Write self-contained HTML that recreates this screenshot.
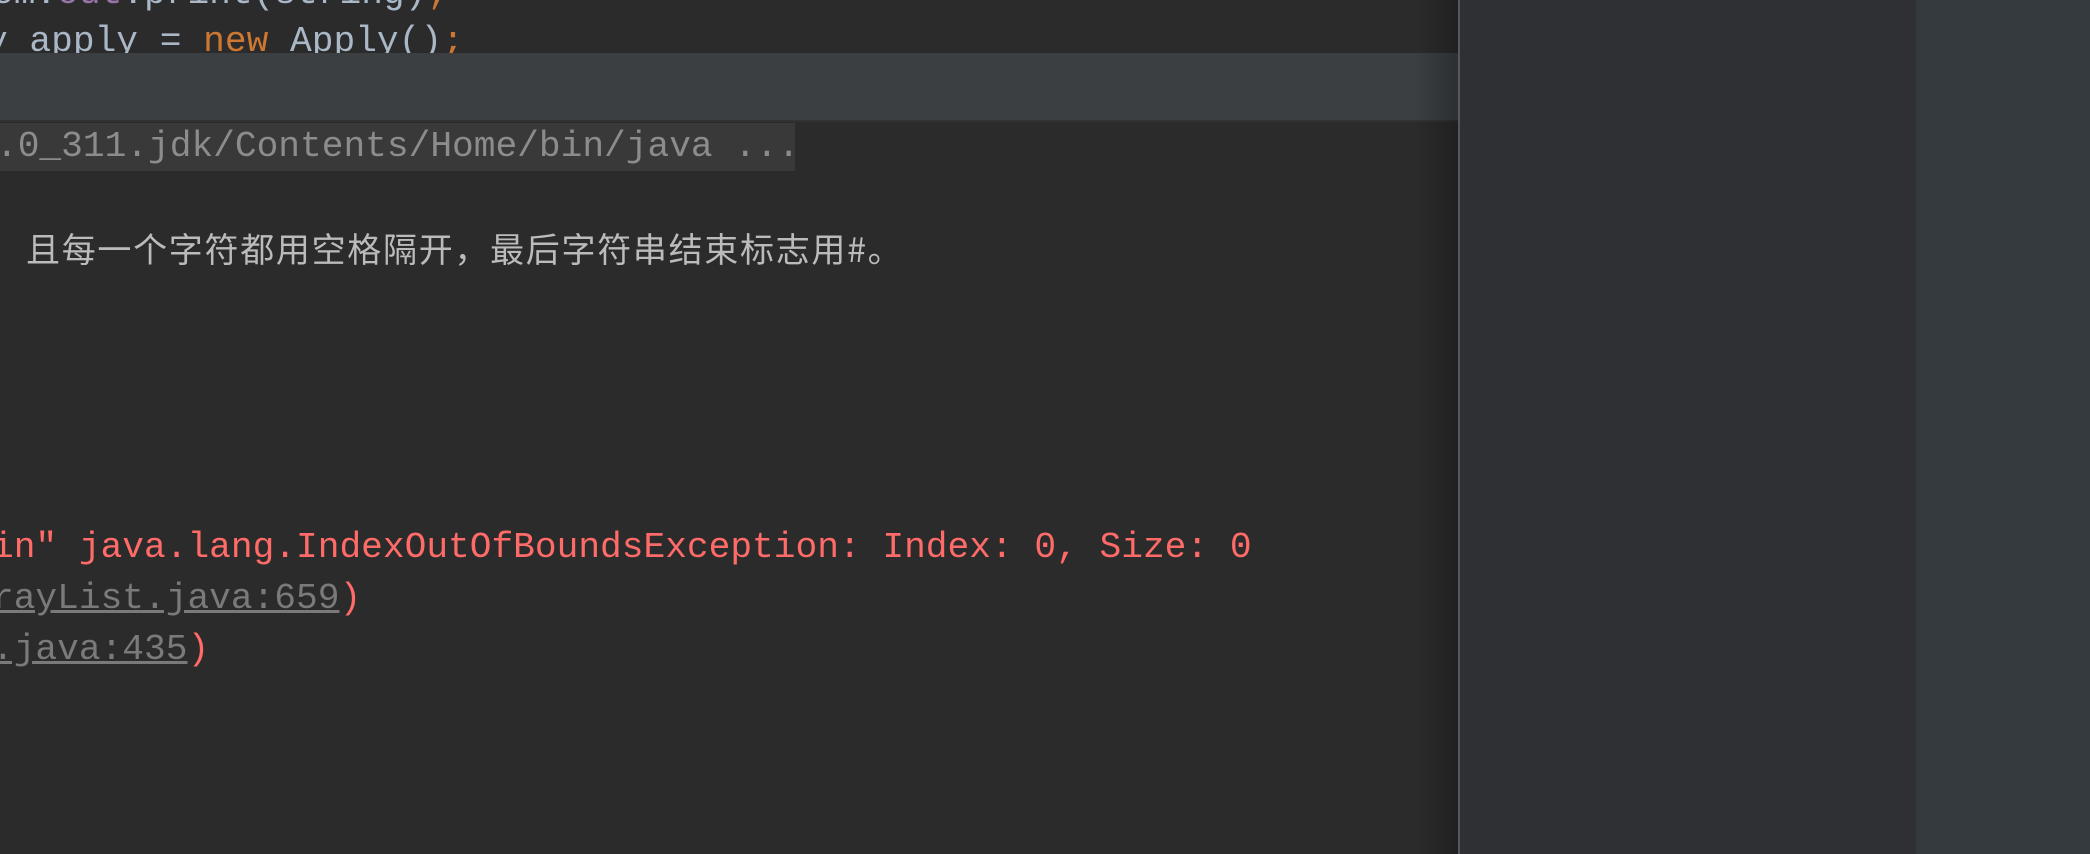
<!DOCTYPE html>
<html><head><meta charset="utf-8"><style>
body{margin:0;width:2090px;height:854px;overflow:hidden;background:#2b2b2b;position:relative;font-family:"Liberation Mono","Noto Sans CJK SC",monospace;}
.a{position:absolute;white-space:pre;font-size:36.2px;line-height:44px;}
</style></head><body>
<div class="a" style="left:-8px;top:-28px;color:#a9b7c6">em.<span style="color:#9876aa">out</span>.print(string)<span style="color:#cc7832">;</span></div>
<div class="a" style="left:-14px;top:20px;color:#a9b7c6">y apply = <span style="color:#cc7832">new</span> Apply()<span style="color:#cc7832">;</span></div>
<div style="position:absolute;left:0;top:53px;width:1458px;height:67px;background:#3b3f42;border-bottom:2px solid #323232"></div>
<div style="position:absolute;left:0;top:123px;width:795px;height:48px;background:#393939"></div>
<div class="a" style="left:-4px;top:125px;color:#8c8c8c">.0_311.jdk/Contents/Home/bin/java ...</div>
<div class="a" style="left:26px;top:225px;font-size:34px;line-height:46px;letter-spacing:1.7px;color:#bbbbbb;font-family:'Noto Sans CJK SC',sans-serif">且每一个字符都用空格隔开，最后字符串结束标志用#。</div>
<div class="a" style="left:-8px;top:526px;color:#ff6b68">in" java.lang.IndexOutOfBoundsException: Index: 0, Size: 0</div>
<div class="a" style="left:-8px;top:577px;color:#ff6b68"><span style="color:#7a7a7a;text-decoration:underline">rayList.java:659</span>)</div>
<div class="a" style="left:-8px;top:628px;color:#ff6b68"><span style="color:#7a7a7a;text-decoration:underline">.java:435</span>)</div>
<div style="position:absolute;left:1414px;top:0;width:44px;height:854px;background:linear-gradient(90deg,rgba(0,0,0,0),rgba(0,0,0,0.25))"></div>
<div style="position:absolute;left:1458px;top:0;width:2px;height:854px;background:#55585c"></div>
<div style="position:absolute;left:1460px;top:0;width:456px;height:854px;background:#2f3034"></div>
<div style="position:absolute;left:1916px;top:0;width:174px;height:854px;background:#353a3e"></div>
</body></html>
